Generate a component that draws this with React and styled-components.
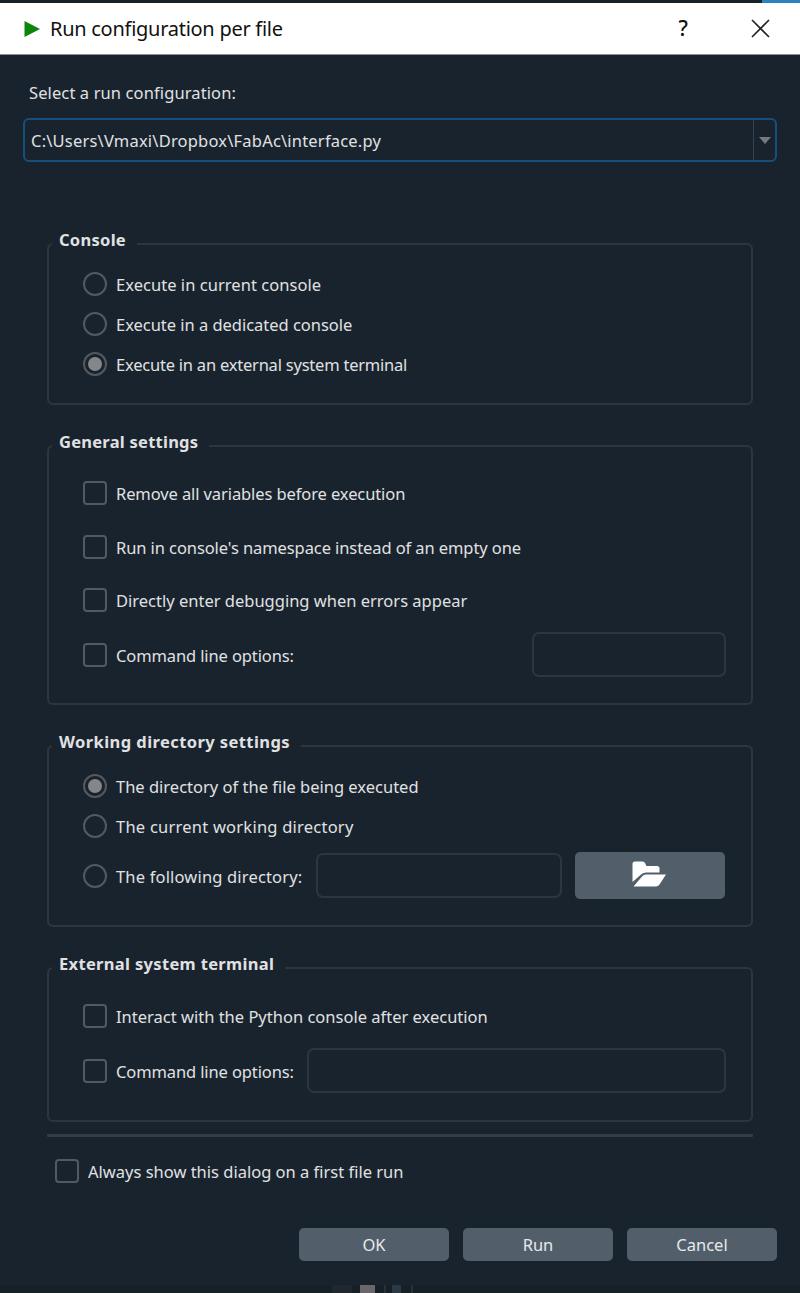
import React from "react";
import styled, { createGlobalStyle } from "styled-components";

const GlobalStyle = createGlobalStyle`
  * { box-sizing: border-box; }
  body {
    margin: 0;
    background: #19232d;
    color: #e0e1e3;
    font-family: "Noto Sans", "Open Sans", sans-serif;
    font-size: 16.5px;
  }
`;

const Dialog = styled.div`
  width: 800px;
  height: 1293px;
  display: flex;
  flex-direction: column;
  overflow: hidden;
`;

const TopEdge = styled.div`
  height: 3px;
  background: linear-gradient(90deg, #192128 762px, #2c83bd 762px);
`;

const TitleBar = styled.header`
  height: 52px;
  display: flex;
  align-items: center;
  padding: 0 30px 0 24px;
  background: #fff;
  color: #111;
  border-bottom: 1px solid #8b9095;
`;

const Title = styled.h1`
  flex: 1;
  margin: 0 0 0 10px;
  font-size: 20px;
  font-weight: 400;
  line-height: 28px;
  letter-spacing: ${(p) => p.$track}px;
`;

const HelpMark = styled.span`
  font-size: 21px;
  line-height: 28px;
  font-weight: 500;
  margin: -2px 63px 0 0;
`;

const Text = styled.span`
  line-height: 24px;
  padding-top: 1px;
  white-space: nowrap;
  letter-spacing: ${(p) => p.$track || 0}px;
`;

const Picker = styled.section`
  padding: 25px 23px 0;
  height: 178px;
  display: flex;
  flex-direction: column;
  gap: 13px;

  > span { padding-left: 6px; }
`;

const Select = styled.div`
  height: 44px;
  display: flex;
  align-items: center;
  border: 2px solid #144f7d;
  border-radius: 6px;
  padding-left: 6px;

  > span { flex: 1; }
`;

const Arrow = styled.div`
  width: 22px;
  height: 40px;
  display: flex;
  align-items: center;
  justify-content: center;
  border-left: 1px solid #37414f;
`;

const Groups = styled.main`
  padding: 0 47px;
  display: flex;
  flex-direction: column;
`;

const Group = styled.fieldset`
  height: ${(p) => p.$h}px;
  min-width: 0;
  margin: 0 0 ${(p) => p.$gap}px;
  padding: ${(p) => p.$top}px 25px 0 0;
  border: 2px solid #2b3641;
  border-radius: 6px;
`;

const Legend = styled.legend`
  position: relative;
  top: -4px;
  margin-left: 3px;
  padding: 0 11px 0 7px;
  height: 22px;
  line-height: 22px;
  font-weight: 700;
  letter-spacing: ${(p) => p.$track}px;
`;

const Row = styled.label`
  height: ${(p) => p.$h}px;
  display: flex;
  align-items: center;
  gap: 9px;
  padding-left: ${(p) => (p.$left === undefined ? 34 : p.$left)}px;
`;

const Box = styled.span`
  width: 24px;
  height: 24px;
  flex: none;
  border: 2px solid #54595f;
  border-radius: 4px;
`;

const Circle = styled(Box)`
  border-radius: 50%;
  display: flex;
  align-items: center;
  justify-content: center;

  &::after {
    content: "";
    width: 14px;
    height: 14px;
    border-radius: 50%;
    background: ${(p) => (p.$on ? "#84868a" : "transparent")};
  }
`;

const Field = styled.span`
  width: ${(p) => p.$w}px;
  height: 45px;
  flex: none;
  margin-left: auto;
  margin-bottom: 1px;
  border: 2px solid #2b3641;
  border-radius: 7px;
`;

const Button = styled.button`
  width: 150px;
  height: ${(p) => p.$h || 33}px;
  flex: none;
  display: flex;
  align-items: center;
  justify-content: center;
  padding: 0;
  border: 0;
  border-radius: 5px;
  background: #525f6a;
  color: #e8e9eb;
  font: inherit;
`;

const BrowseButton = styled(Button)`
  margin: 0 1px 2px 4px;
  padding: 0 3px 3px 0;
`;

const Divider = styled.div`
  height: 3px;
  margin: 0 0 17px;
  background: #303c47;
  border-radius: 1px;
`;

const Footer = styled.footer`
  height: 33px;
  margin-top: 40px;
  padding-right: 23px;
  display: flex;
  justify-content: flex-end;
  gap: 14px;
`;

const BottomEdge = styled.div`
  height: 8px;
  margin-top: auto;
  display: flex;
  background: #171f27;
  padding-left: 332px;
`;

const Chip = styled.span`
  width: ${(p) => p.$w}px;
  margin-right: ${(p) => p.$gap}px;
  background: ${(p) => p.$c};
`;

const Radio = ({ h = 40, on, track, children, extra }) => (
  <Row $h={h}>
    <Circle $on={on} />
    <Text $track={track}>{children}</Text>
    {extra}
  </Row>
);

const Check = ({ h = 54, left, track, children, extra }) => (
  <Row $h={h} $left={left}>
    <Box />
    <Text $track={track}>{children}</Text>
    {extra}
  </Row>
);

const FolderOpen = () => (
  <svg width="34" height="26" viewBox="0 0 34 26" fill="#fff">
    <path d="M0.500 21V3Q.5 .5 3 .5H10.500Q12.500 .5 13.300 2.500L14.300 5H25Q27.500 5 27.500 7.500V11.500H14Q10.500 11.500 8.500 14Z" />
    <path d="M10 15.500Q11.500 13.500 14 13.500H34L27.500 23.500Q26 25.500 24 25.500H1.500Z" />
  </svg>
);

export default function App() {
  return (
    <>
      <GlobalStyle />
      <Dialog>
        <TopEdge />
        <TitleBar>
          <svg width="16" height="16" viewBox="0 0 16 16">
            <path d="M0.500 0L16 8L0.500 16Z" fill="#0b850b" />
          </svg>
          <Title $track={-0.27}>Run configuration per file</Title>
          <HelpMark>?</HelpMark>
          <svg width="19" height="19" viewBox="0 0 19 19" stroke="#222" strokeWidth="1.6">
            <path d="M1 1L18 18M18 1L1 18" />
          </svg>
        </TitleBar>
        <Picker>
          <Text $track={0.11}>Select a run configuration:</Text>
          <Select>
            <Text $track={0.2}>C:\Users\Vmaxi\Dropbox\FabAc\interface.py</Text>
            <Arrow>
              <svg width="12" height="7" viewBox="0 0 12 7">
                <path d="M0 0H12L6 7Z" fill="#76797f" />
              </svg>
            </Arrow>
          </Select>
        </Picker>
        <Groups>
          <Group $h={172} $gap={30} $top={9}>
            <Legend $track={0.28}>Console</Legend>
            <Radio track={0.04}>Execute in current console</Radio>
            <Radio track={-0.03}>Execute in a dedicated console</Radio>
            <Radio on track={-0.22}>Execute in an external system terminal</Radio>
          </Group>
          <Group $h={270} $gap={30} $top={9}>
            <Legend $track={0.25}>General settings</Legend>
            <Check track={-0.1}>Remove all variables before execution</Check>
            <Check track={-0.09}>Run in console's namespace instead of an empty one</Check>
            <Check h={52}>Directly enter debugging when errors appear</Check>
            <Check h={58} track={-0.12} extra={<Field $w={194} />}>Command line options:</Check>
          </Group>
          <Group $h={192} $gap={30} $top={9}>
            <Legend $track={0.42}>Working directory settings</Legend>
            <Radio on>The directory of the file being executed</Radio>
            <Radio track={0.23}>The current working directory</Radio>
            <Radio
              h={60}
              track={0.17}
              extra={
                <>
                  <Field $w={246} />
                  <BrowseButton $h={47}>
                    <FolderOpen />
                  </BrowseButton>
                </>
              }
            >
              The following directory:
            </Radio>
          </Group>
          <Group $h={165} $gap={12} $top={10}>
            <Legend $track={0.33}>External system terminal</Legend>
            <Check>Interact with the Python console after execution</Check>
            <Check h={56} track={-0.12} extra={<Field $w={419} />}>Command line options:</Check>
          </Group>
          <Divider />
          <Check h={34} left={8}>Always show this dialog on a first file run</Check>
        </Groups>
        <Footer>
          <Button>OK</Button>
          <Button>Run</Button>
          <Button>Cancel</Button>
        </Footer>
        <BottomEdge>
          <Chip $w={20} $gap={8} $c="#20272e" />
          <Chip $w={15} $gap={9} $c="#69676a" />
          <Chip $w={2} $gap={6} $c="#26323b" />
          <Chip $w={9} $gap={10} $c="#2b3945" />
          <Chip $w={2} $gap={0} $c="#26323b" />
        </BottomEdge>
      </Dialog>
    </>
  );
}
